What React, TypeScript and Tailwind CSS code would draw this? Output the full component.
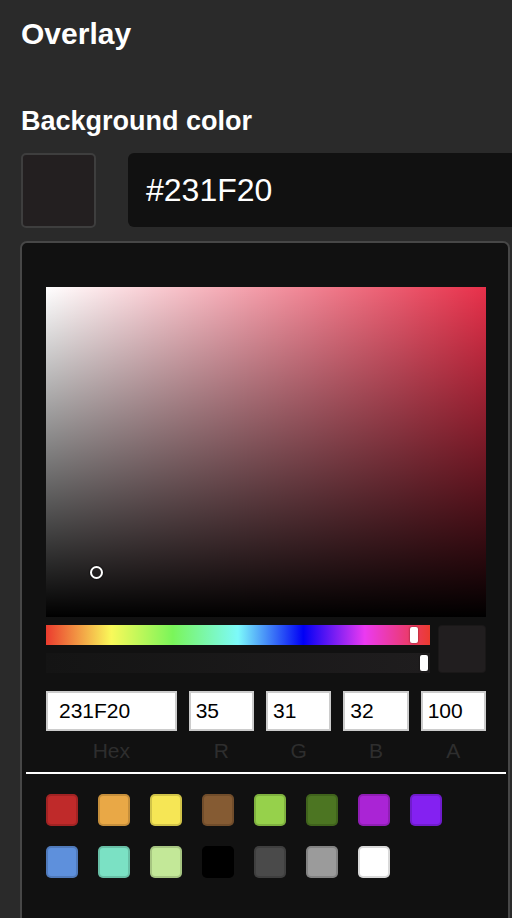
import React from 'react';

const presets = [
  '#bf2a2a', '#e9a846', '#f6e655', '#855b33', '#96d14b', '#4c7522', '#aa24d5', '#8421f1',
  '#5e90dc', '#7be1c4', '#c3e898', '#000000', '#4a4a4a', '#9b9b9b', '#ffffff',
];

const fields = [
  { label: 'Hex', value: '231F20', wide: true },
  { label: 'R', value: '35' },
  { label: 'G', value: '31' },
  { label: 'B', value: '32' },
  { label: 'A', value: '100' },
];

export default function App() {
  return (
    <div className="w-[512px] h-[918px] overflow-hidden bg-[#2a2a2a] font-['Liberation_Sans',Arial,sans-serif] text-white">
      <div className="pl-[21px] pt-[16px]">
        <h1 className="text-[30px] leading-[36px] font-bold">Overlay</h1>
        <h2 className="mt-[53px] text-[27px] leading-[32px] font-bold">Background color</h2>

        <div className="mt-[16px] flex items-start">
          <div className="w-[75px] h-[75px] shrink-0 rounded-[5px] border-2 border-[#3e3e3e] bg-[#231f20]" />
          <div className="ml-[32px] w-[420px] h-[74px] shrink-0 flex items-center rounded-[6px] bg-[#111111] pl-[18px] text-[32px]">
            #231F20
          </div>
        </div>
      </div>

      <ColorPicker />
    </div>
  );
}

function ColorPicker() {
  return (
    <div className="ml-[20px] mt-[13px] w-[490px] h-[700px] rounded-[7px] border-2 border-[#474747] bg-[#111111] pt-[44px] pl-[24px] pr-[22px]">
      {/* saturation area */}
      <div className="relative w-[440px] h-[330px] bg-[#e8304a]">
        <div className="absolute inset-0 bg-gradient-to-r from-white to-transparent" />
        <div className="absolute inset-0 bg-gradient-to-b from-transparent to-black" />
        <div className="absolute left-[44px] top-[279px] w-[13px] h-[13px] rounded-full border-2 border-white shadow-[0_0_1px_1px_rgba(0,0,0,0.4)]" />
      </div>

      <div className="mt-[8px] flex gap-[8px]">
        <div className="flex-1 flex flex-col gap-[8px]">
          <div className="relative h-[20px] bg-[linear-gradient(to_right,#eb3b2e_0%,#f9f95a_17%,#7af55a_33%,#7dfafa_50%,#0000f5_67%,#eb3af1_83%,#eb3b2e_100%)]">
            <div className="absolute left-[364px] top-[2px] w-[8px] h-[16px] rounded-[2px] bg-white shadow-[0_0_2px_rgba(0,0,0,0.6)]" />
          </div>
          <div className="relative h-[20px] bg-gradient-to-r from-[#141414] to-[#1f1d1e]">
            <div className="absolute right-[2px] top-[2px] w-[8px] h-[16px] rounded-[2px] bg-white shadow-[0_0_2px_rgba(0,0,0,0.6)]" />
          </div>
        </div>
        <div className="w-[48px] h-[48px] rounded-[4px] bg-[#211e1f] shadow-[inset_0_0_0_1px_rgba(0,0,0,0.2)]" />
      </div>

      <div className="mt-[18px] flex gap-[12px]">
        {fields.map((f) => (
          <div key={f.label} className={f.wide ? 'flex-[2] flex flex-col' : 'flex-1 flex flex-col'}>
            <div
              className={
                'h-[40px] flex items-center bg-white text-black text-[21px] shadow-[inset_0_0_0_2px_#cccccc] ' +
                (f.wide ? 'pl-[13px]' : 'pl-[7px]')
              }
            >
              {f.value}
            </div>
            <div className="mt-[8px] text-center text-[21px] leading-[24px] text-[#2e2e2e]">{f.label}</div>
          </div>
        ))}
      </div>

      <div className="mt-[9px] -ml-[20px] w-[480px] h-[2px] bg-white" />

      <div className="mt-[20px] flex flex-wrap gap-[20px]">
        {presets.map((c) => (
          <div
            key={c}
            className="w-[32px] h-[32px] rounded-[5px] shadow-[inset_0_0_0_2px_rgba(0,0,0,0.15)]"
            style={{ backgroundColor: c }}
          />
        ))}
      </div>
    </div>
  );
}
